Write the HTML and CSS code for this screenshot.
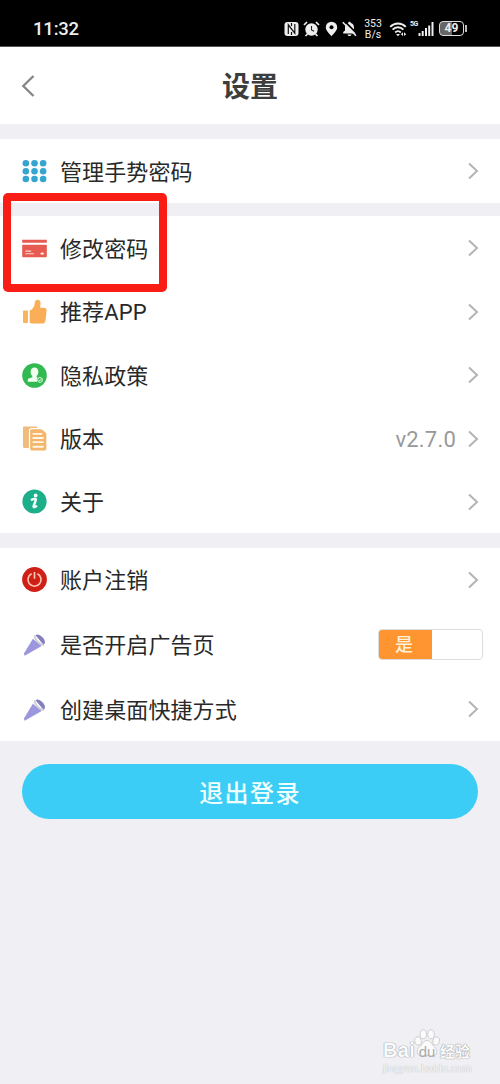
FILE: index.html
```
<!DOCTYPE html>
<html lang="zh-CN">
<head>
<meta charset="utf-8">
<title>设置</title>
<link rel="stylesheet" href="styles.css">
</head>
<body>
<svg class="defs" width="0" height="0">
  <symbol id="chevron" viewBox="0 0 12 20"><path d="M2 2.500 10 10l-8 7.500" fill="none" stroke="#b4b4b4" stroke-width="2"/></symbol>
  <symbol id="torch" viewBox="0 0 26 26">
    <path d="M2 22.300 11.300 7 20.500 14.500 5 23.500l-2.300 1.300z" fill="#9b97df"/>
    <path d="M14 3.300c2-1.700 5-.3 7.300 2.200 2.700 3 3.600 5.800 1.200 7.900z" fill="#8380bd"/>
    <path d="M13.500 3.600c-1.300 3 4.600 9.800 9 9.900" fill="none" stroke="#cfccd8" stroke-width="1.900"/>
  </symbol>
</svg>
<div class="screen">
  <div class="status">
    <span class="time">11:32</span>
    <div class="indicators">
      <svg class="nfc" width="15" height="16" viewBox="0 0 15 16"><rect x=".5" y="1" width="14" height="14" rx="3" fill="#eee"/><path d="M4.300 13V3.800L10.800 12.200V3M7.500 2v3M7.500 11v3" fill="none" stroke="#111" stroke-width="1.200"/></svg>
      <svg class="alarm" width="17" height="16" viewBox="0 0 17 16"><circle cx="8.500" cy="8.500" r="6.200" fill="#eee"/><path d="M1 4 4 1M16 4l-3-3M4.500 13l-2 2M12.500 13l2 2" stroke="#eee" stroke-width="1.700"/><path d="M8.500 5V9l2.600 1.300" fill="none" stroke="#222" stroke-width="1.100"/></svg>
      <svg class="pin" width="13" height="16" viewBox="0 0 13 16"><path d="M6.500 15.300C4.500 12.500.8 9.500.8 6.400a5.700 5.700 0 0 1 11.400 0c0 3.100-3.700 6.100-5.700 8.900z" fill="#eee"/><circle cx="6.500" cy="6.200" r="2" fill="#000"/></svg>
      <svg class="bell" width="15" height="16" viewBox="0 0 15 16"><path d="M1.200 12.500V11l1.800-1.600V6.500c0-2.500 1.200-4 3.200-4.500 0-1.700 2.600-1.700 2.600 0 2 .5 3.200 2 3.200 4.500v2.900l1.800 1.600v1.500zM5.500 13.500h4c-.4 2-3.600 2-4 0z" fill="#eee"/><path d="M2.500.2 15 12.700" stroke="#000" stroke-width="1.700"/><path d="M.8 1.300 14 14.700" stroke="#eee" stroke-width="1.600"/></svg>
      <div class="speed"><span>353</span><span>B/s</span></div>
      <svg class="wifi" width="18" height="16" viewBox="0 0 18 16"><path d="M1.200 5.800c4.500-4.500 11.100-4.500 15.600 0M3.600 8.700c3.100-3.200 7.700-3.200 10.800 0M6.200 11.500c1.700-1.800 3.800-1.800 5.600 0" fill="none" stroke="#eee" stroke-width="1.900"/><path d="m7 13 2 2.300 2-2.300zM14 11.300v3.700l-2.200-1.850zM15 11.300v3.700l2.200-1.850z" fill="#eee"/></svg>
      <span class="fiveg">5G</span>
      <svg class="signal" width="16" height="16" viewBox="0 0 16 16"><path d="M1.500 15v-3M4.700 15v-5M8 15V7M11.200 15V4.500M14.500 15V1" stroke="#eee" stroke-width="2"/></svg>
      <div class="battery"><span>49</span></div><i class="nub"></i>
    </div>
  </div>
  <header class="header">
    <svg class="back" width="14" height="24" viewBox="0 0 14 24"><path d="M12.500 2 2.300 12l10.200 10" fill="none" stroke="#858585" stroke-width="2.300"/></svg>
    <h1>设置</h1>
  </header>

  <section class="group single">
    <div class="row">
      <svg class="icon" viewBox="0 0 26 26"><g fill="#33a5cf"><circle cx="4" cy="4.500" r="3.400"/><circle cx="13" cy="4.500" r="3.400"/><circle cx="22" cy="4.500" r="3.400"/><circle cx="4" cy="12.700" r="3.400"/><circle cx="13" cy="12.700" r="3.400"/><circle cx="22" cy="12.700" r="3.400"/><circle cx="4" cy="20.900" r="3.400"/><circle cx="13" cy="20.900" r="3.400"/><circle cx="22" cy="20.900" r="3.400"/></g></svg>
      <span class="label">管理手势密码</span><svg class="chevron"><use href="#chevron"/></svg>
    </div>
  </section>

  <section class="group main">
    <div class="row marked">
      <svg class="icon" viewBox="0 0 26 26"><path d="M.2 4h25.600v2.900H.2zM.2 9h25.600v12q0 1-1 1H1.200q-1 0-1-1z" fill="#e65a52"/><path d="M3.500 15.800h6M3.500 18.500h8.800M19 18.300h4" stroke="#ffd7d1" stroke-width="1.200"/><circle cx="21" cy="18.200" r="1.300" fill="#ffe2dd"/></svg>
      <span class="label">修改密码</span><svg class="chevron"><use href="#chevron"/></svg>
      <div class="highlight"></div>
    </div>
    <div class="row">
      <svg class="icon" viewBox="0 0 26 26"><path d="M1.200 12h4.300q.7 0 .7.700v11.500q0 .8-.7.800H2q-1 0-1-1V12.500z" fill="#f6b55e"/><path d="M8 12c3-1.200 5-3.600 5.200-7.500.1-2.500 1.200-3.700 3-3.700 2.300 0 3.300 1.800 3.100 4.200L18.900 9h3.800c2 0 3.100 1.200 2.900 3.100l-1.100 10.200c-.3 2.100-1.400 3.200-3.400 3.200H11c-1.400 0-2.200-.3-3-1z" fill="#f9ae57"/></svg>
      <span class="label">推荐APP</span><svg class="chevron"><use href="#chevron"/></svg>
    </div>
    <div class="row">
      <svg class="icon" viewBox="0 0 26 26"><circle cx="13" cy="13" r="12.800" fill="#33b951"/><path d="M13 4.700c2.600 0 4 1.800 4 4.300 0 2-.7 3.400-1.700 4.300v1.500l4.100 1.500c-2 .5-2.600 2-2 3.300H6v-2.300c0-1 1.200-1.500 4.700-2.500v-1.500C9.600 12.400 9 11 9 9c0-2.500 1.400-4.300 4-4.300z" fill="#f0ffef"/><circle cx="18.700" cy="17.600" r="3.300" fill="#33b951"/><circle cx="18.700" cy="17.600" r="2.500" fill="none" stroke="#d8ffdc"/><path d="m17.400 17.500 1 1 2-2.100" fill="none" stroke="#fff"/></svg>
      <span class="label">隐私政策</span><svg class="chevron"><use href="#chevron"/></svg>
    </div>
    <div class="row">
      <svg class="icon" viewBox="0 0 26 26"><path d="M2 .5h12.500q1.300 0 1.300 1.500H10Q7.200 2 7.200 5v18H2.500Q1 23 1 21.500V2Q1 .5 2 .5z" fill="#efbc7b"/><path d="M10 3.300h10.500l4.800 4.200v16.500q0 1.500-1.500 1.500H10q-1.500 0-1.500-1.500V4.800q0-1.500 1.500-1.500z" fill="#f4b66c"/><path d="M11 8.200h10M11 12.500h11.500M11 16.800h11.500M11 21.600h11.500" stroke="#fff5e5" stroke-width="2"/></svg>
      <span class="label">版本</span><span class="version">v2.7.0</span><svg class="chevron"><use href="#chevron"/></svg>
    </div>
    <div class="row">
      <svg class="icon" viewBox="0 0 26 26"><circle cx="13" cy="13" r="12.600" fill="#1caf89"/><circle cx="14.200" cy="6.800" r="2" fill="#f1fff9"/><path d="M9.300 11.700c1.800-1.200 4.900-1.900 5.100-.7.300 1.300-2.100 5-2.400 6.800-.3 1.800 1.500 1.200 3.600-.3" fill="none" stroke="#f1fff9" stroke-width="2.500"/></svg>
      <span class="label">关于</span><svg class="chevron"><use href="#chevron"/></svg>
    </div>
  </section>

  <section class="group extra">
    <div class="row">
      <svg class="icon" viewBox="0 0 26 26"><circle cx="13" cy="13" r="12.900" fill="#cf2018"/><path d="M10 7.100a6.800 6.800 0 1 0 6 0M13 5.200v7" fill="none" stroke="#ffc8b2" stroke-width="1.700"/></svg>
      <span class="label">账户注销</span><svg class="chevron"><use href="#chevron"/></svg>
    </div>
    <div class="row">
      <svg class="icon"><use href="#torch"/></svg>
      <span class="label">是否开启广告页</span><div class="switch"><span>是</span></div>
    </div>
    <div class="row">
      <svg class="icon"><use href="#torch"/></svg>
      <span class="label">创建桌面快捷方式</span><svg class="chevron"><use href="#chevron"/></svg>
    </div>
  </section>

  <button class="logout">退出登录</button>

  <div class="watermark">
    <svg class="paw" width="26" height="28" viewBox="0 0 26 28"><g fill="#fbfbfc" stroke="#cbcbce" stroke-width=".9"><ellipse cx="4" cy="12" rx="3.200" ry="4.200" transform="rotate(-15 4 12)"/><ellipse cx="9.300" cy="5.300" rx="3.200" ry="4.500"/><ellipse cx="17" cy="5.300" rx="3.200" ry="4.500"/><ellipse cx="22.200" cy="12" rx="3.200" ry="4.200" transform="rotate(15 22.200 12)"/><path d="M13 11.500c-4 0-4.500 4-7.500 6.500-4 3.500-2.500 9 2 9 2 0 3.500-.7 5.500-.7s3.500.7 5.500.7c4.500 0 6-5.500 2-9-3-2.500-3.500-6.500-7.500-6.500z"/></g></svg>
    <div class="brand"><span class="bai">Bai</span><span class="du">du</span><span class="exp">经验</span></div>
    <div class="site">jingyan.baidu.com</div>
  </div>
</div>
</body>
</html>
```
FILE: styles.css
```
* { box-sizing: border-box; }
body { margin: 0; background: #efeff4; font-family: Roboto, "Noto Sans CJK SC", sans-serif; color: #282828; }
.defs { position: absolute; }
.screen { position: relative; width: 500px; height: 1084px; overflow: hidden; display: flex; flex-direction: column; }
.status { height: 47px; flex: none; background: #000; color: #eee; display: flex; justify-content: space-between; padding: 10px 33px 0; border-bottom: 1px solid #555; }
.time { font-size: 18.5px; line-height: 38px; font-weight: 500; letter-spacing: -.2px; }
.indicators { display: flex; align-items: center; height: 37px; }
.indicators svg { flex: none; }
.nfc { margin-right: 4px; }
.alarm { margin-right: 5px; }
.pin { margin-right: 4px; }
.bell { margin-right: 6px; }
.speed { display: flex; flex-direction: column; width: 20px; text-align: center; font-size: 10.500px; line-height: 11px; margin-right: 6px; }
.speed span { height: 11px; overflow: hidden; }
.wifi { margin-right: 3px; }
.fiveg { font-size: 7px; font-weight: 700; line-height: 8px; align-self: flex-start; margin-top: 10px; width: 8px; letter-spacing: -.5px; }
.signal { margin-right: 5px; }
.battery { width: 25px; height: 15px; border: 1.500px solid #ddd; border-radius: 4px; background: linear-gradient(90deg, #666 50%, #000 50%); font-size: 12px; line-height: 13px; font-weight: 700; text-align: center; flex: none; }
.nub { width: 2px; height: 7px; margin-left: 1px; background: #bbb; flex: none; }
.header { height: 77px; flex: none; background: #fff; display: flex; align-items: center; padding: 0 21px; }
.back { flex: none; }
.header h1 { flex: 1; margin: 0 14px 0 0; padding-top: 5px; text-align: center; font-size: 28px; line-height: 40px; font-weight: 700; color: #3d3d3d; }
.group { background: #fff; display: grid; flex: none; }
.single { margin-top: 15px; grid-template-rows: 64px; }
.main { margin-top: 13px; grid-template-rows: 64px 63px 64px 63px 63px; }
.extra { margin-top: 15px; grid-template-rows: 63px 66px 64px; }
.row { position: relative; display: flex; align-items: center; padding: 0 21px 0 22px; }
.icon { width: 25px; height: 25px; margin-right: 13px; flex: none; }
.label { flex: 1; padding-top: 3px; font-size: 22px; line-height: 32px; letter-spacing: .1px; }
.version { padding-top: 2px; font-size: 22px; color: #999; letter-spacing: .2px; margin-right: 11px; }
.chevron { width: 12px; height: 20px; flex: none; }
.highlight { position: absolute; left: 3px; top: -23px; width: 164px; height: 99px; border: 8px solid #f91d15; border-radius: 5px; z-index: 2; }
.switch { width: 105px; height: 31px; margin-right: -4px; border: 1px solid #ddd; border-radius: 4px; background: #fff; overflow: hidden; }
.switch span { display: block; width: 53px; height: 29px; background: #fe9530; color: #fff1d8; font-size: 18px; font-weight: 500; line-height: 30px; text-align: center; padding-right: 3px; }
.logout { margin: 23px 22px 0; height: 55px; flex: none; border: 0; border-radius: 28px; background: #3ccdf7; color: #effffd; font: 500 24px "Noto Sans CJK SC", sans-serif; letter-spacing: 1.400px; }
.watermark { position: absolute; left: 383px; top: 1029px; width: 92px; height: 46px; color: #fbfbfc; }
.paw { position: absolute; left: 31px; top: 0; }
.brand { position: relative; display: flex; align-items: baseline; padding-top: 9px; height: 33px; font: 700 20px/24px "Liberation Sans", "Noto Sans CJK SC", sans-serif; text-shadow: 0 0 1px #999, 0 0 1px #aaa, 0 0 1px #bbb; }
.bai { width: 31px; letter-spacing: .3px; }
.du { width: 26px; text-align: center; font-size: 15px; font-weight: 400; color: #aaa; text-shadow: none; }
.exp { font-size: 15px; white-space: nowrap; }
.site { font: 11px/12px "Liberation Sans", sans-serif; text-shadow: 0 0 1px #bbb, 0 0 1px #ccc; color: #f8f8fa; white-space: nowrap; }
```
